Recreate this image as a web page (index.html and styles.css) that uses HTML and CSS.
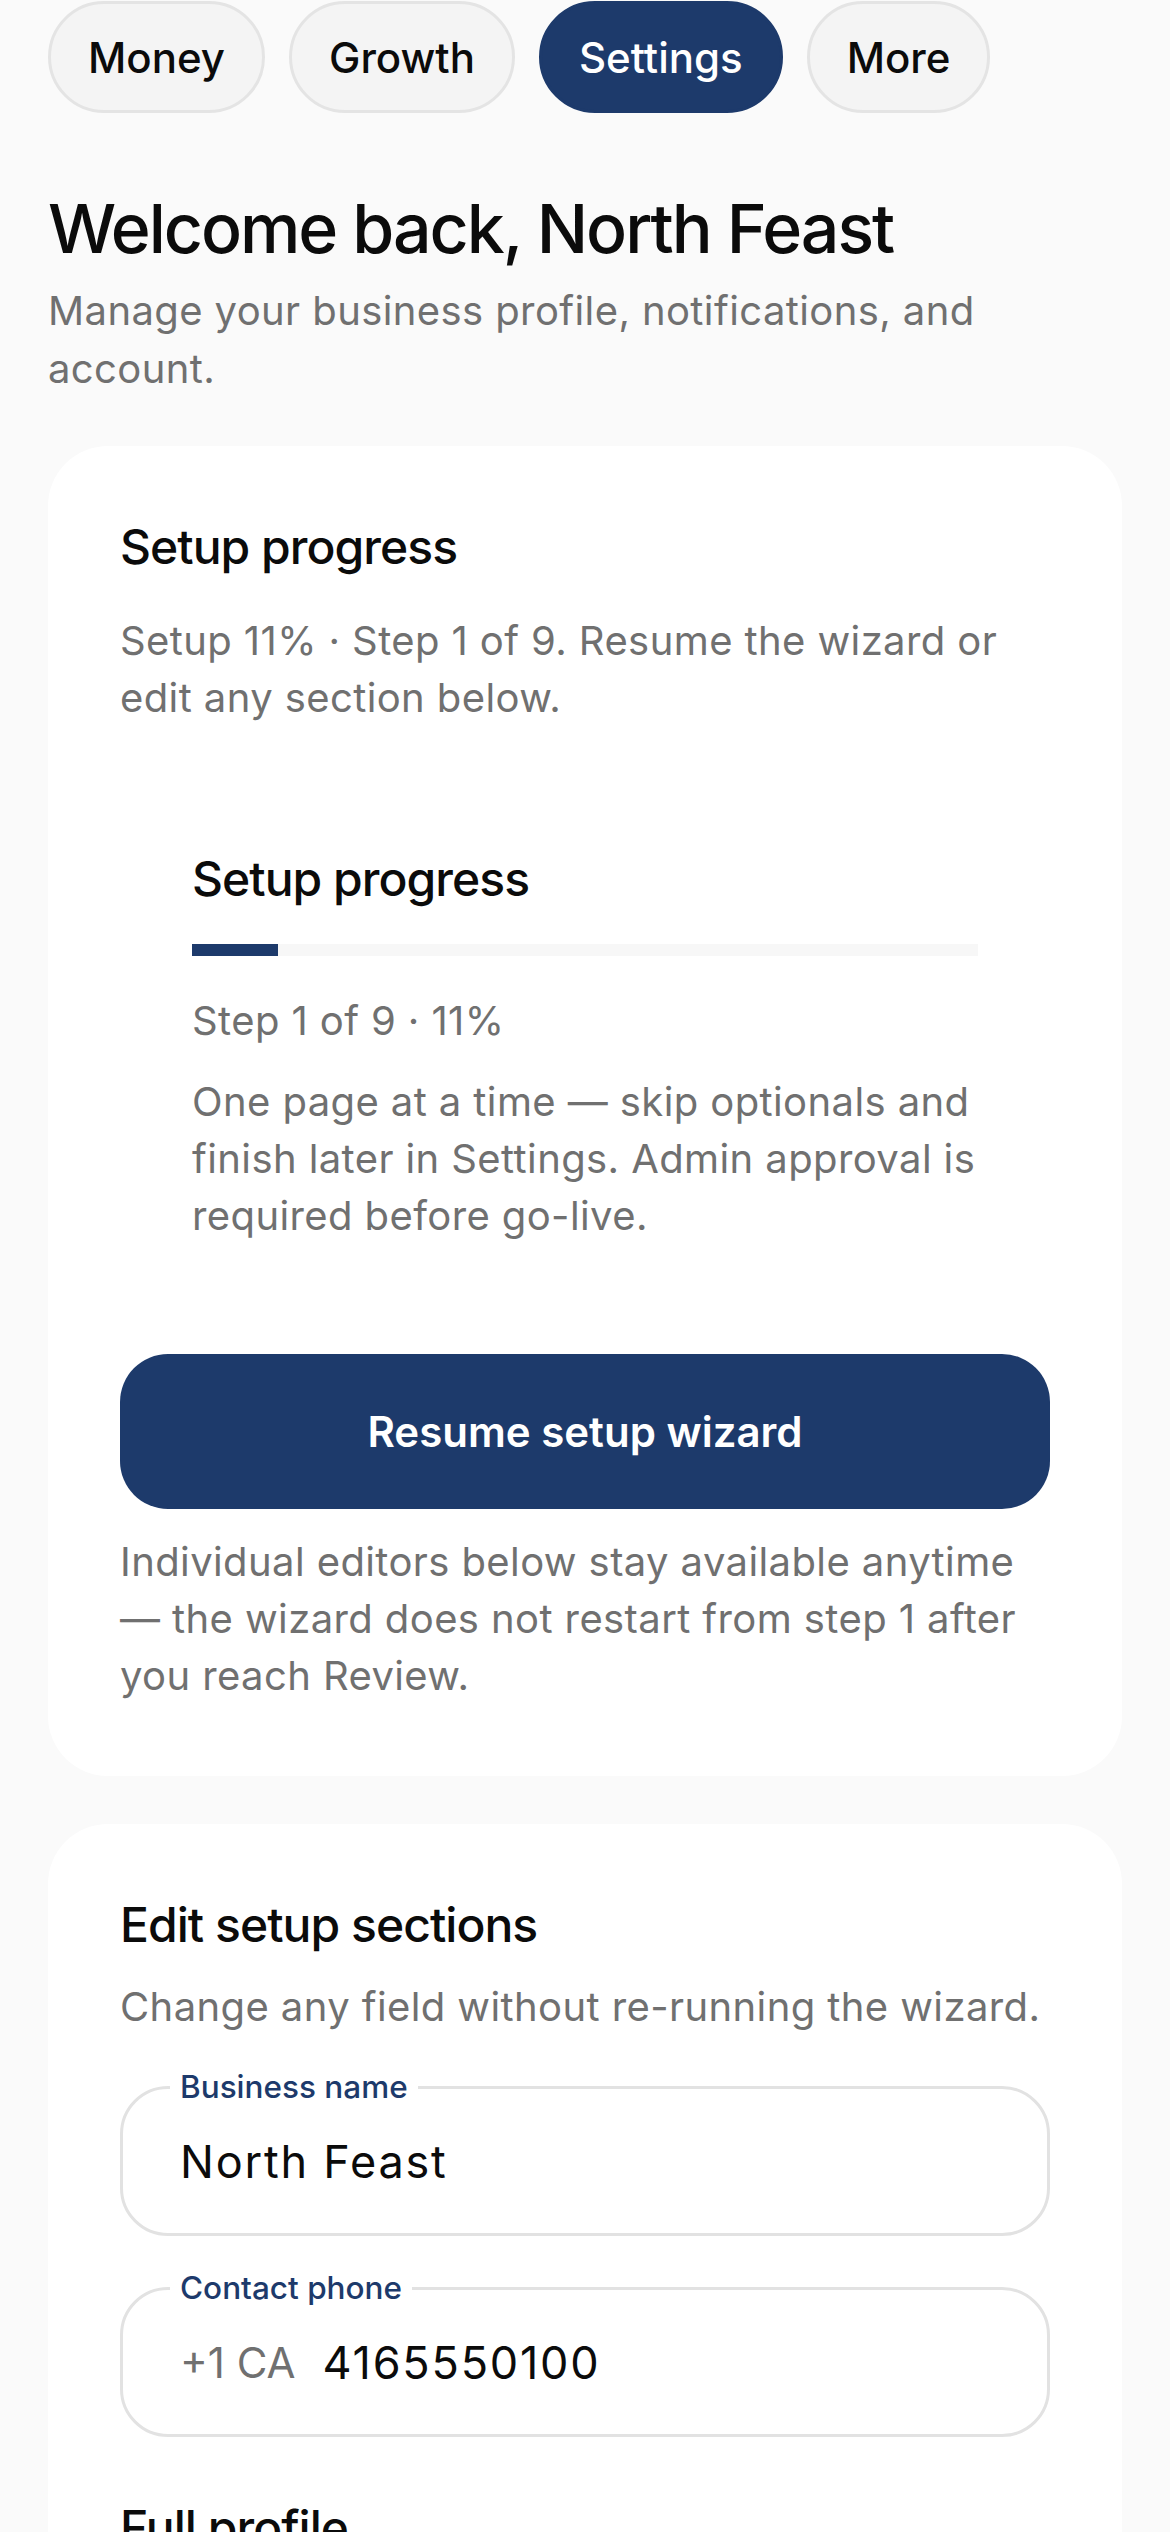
FILE: index.html
```html
<!DOCTYPE html>
<html lang="en">
<head>
    <meta charset="UTF-8">
    <meta name="viewport" content="width=device-width, initial-scale=1.0">
    <title>Settings - North Feast</title>
    <link rel="stylesheet" href="styles.css">
</head>
<body>
    <div class="page">
        <!-- Top section tabs -->
        <nav class="tabs">
            <a class="tab" href="#">Money</a>
            <a class="tab" href="#">Growth</a>
            <a class="tab active" href="#">Settings</a>
            <a class="tab" href="#">More</a>
        </nav>

        <h1 class="welcome">Welcome back, North Feast</h1>
        <p class="lead">Manage your business profile, notifications, and account.</p>

        <!-- Setup progress card -->
        <section class="card">
            <h2>Setup progress</h2>
            <p class="muted">Setup 11% · Step 1 of 9. Resume the wizard or edit any section below.</p>

            <div class="progress-box">
                <h3>Setup progress</h3>
                <div class="bar">
                    <div class="bar-fill" style="width: 11%"></div>
                </div>
                <p class="muted step">Step 1 of 9 · 11%</p>
                <p class="muted desc">One page at a time — skip optionals and finish later in Settings. Admin approval is required before go-live.</p>
            </div>

            <button class="primary" type="button">Resume setup wizard</button>
            <p class="muted note">Individual editors below stay available anytime — the wizard does not restart from step 1 after you reach Review.</p>
        </section>

        <!-- Section editors -->
        <section class="card">
            <h2 class="tight">Edit setup sections</h2>
            <p class="muted">Change any field without re-running the wizard.</p>

            <div class="field">
                <span class="field-label">Business name</span>
                <span class="field-value">North Feast</span>
            </div>

            <div class="field">
                <span class="field-label">Contact phone</span>
                <span class="field-prefix">+1 CA</span>
                <span class="field-value">4165550100</span>
            </div>

            <h2 class="next">Full profile</h2>
        </section>
    </div>
</body>
</html>
```

FILE: styles.css
```css
body {
    margin: 0;
    padding: 0;
    background-color: #fafafa;
    font-family: Inter, "Noto Sans", sans-serif;
    color: #0b0b0b;
}

.page {
    padding: 1px 48px 0;
}

/* Tabs */
.tabs {
    display: flex;
    gap: 24px;
}

.tab {
    display: flex;
    align-items: center;
    height: 112px;
    box-sizing: border-box;
    padding: 0 37px;
    border: 3px solid #e4e4e4;
    border-radius: 999px;
    background-color: #f4f4f4;
    color: #0b0b0b;
    font-size: 42px;
    font-weight: 500;
    text-decoration: none;
}

.tab.active {
    background-color: #1d3a6b;
    border-color: #1d3a6b;
    color: #fff;
}

/* Header */
.welcome {
    margin: 74px 0 13px;
    font-size: 68px;
    line-height: 82px;
    font-weight: 500;
    letter-spacing: -0.03em;
}

.lead {
    margin: 0 0 48px;
    font-size: 40px;
    line-height: 58px;
    letter-spacing: 0.01em;
    color: #707070;
}

/* Cards */
.card {
    background-color: #fff;
    border-radius: 60px;
    padding: 72px;
    margin-bottom: 48px;
}

.card h2,
.progress-box h3 {
    margin: 0 0 36px;
    font-size: 48px;
    line-height: 58px;
    font-weight: 500;
    letter-spacing: -0.02em;
}

.card h2.tight {
    margin-bottom: 24px;
}

.card h2.next {
    margin: 62px 0 0;
}

.muted {
    margin: 0;
    font-size: 40px;
    line-height: 57px;
    letter-spacing: 0.01em;
    color: #707070;
}

/* Nested progress block */
.progress-box {
    margin-top: 52px;
    padding: 72px;
}

.bar {
    height: 12px;
    background-color: #f7f7f7;
}

.bar-fill {
    height: 100%;
    background-color: #1d3a6b;
}

.step {
    margin-top: 36px;
}

.desc {
    margin-top: 24px;
}

.primary {
    display: block;
    width: 100%;
    height: 155px;
    margin-top: 38px;
    border: none;
    border-radius: 48px;
    background-color: #1d3a6b;
    color: #fff;
    font-family: inherit;
    font-size: 42px;
    font-weight: 600;
    cursor: pointer;
}

.note {
    margin-top: 24px;
}

/* Outlined fields */
.field {
    position: relative;
    display: flex;
    align-items: center;
    gap: 27px;
    height: 150px;
    box-sizing: border-box;
    margin-top: 51px;
    padding: 0 57px;
    border: 3px solid #e2e2e2;
    border-radius: 48px;
}

.field-label {
    position: absolute;
    top: -21px;
    left: 47px;
    padding: 0 10px;
    background-color: #fff;
    color: #1d3a6b;
    font-size: 31.5px;
    line-height: 38px;
    font-weight: 500;
}

.field-value {
    font-size: 45px;
    color: #0b0b0b;
    letter-spacing: 0.04em;
}

.field-prefix {
    font-size: 42px;
    color: #707070;
}
```
